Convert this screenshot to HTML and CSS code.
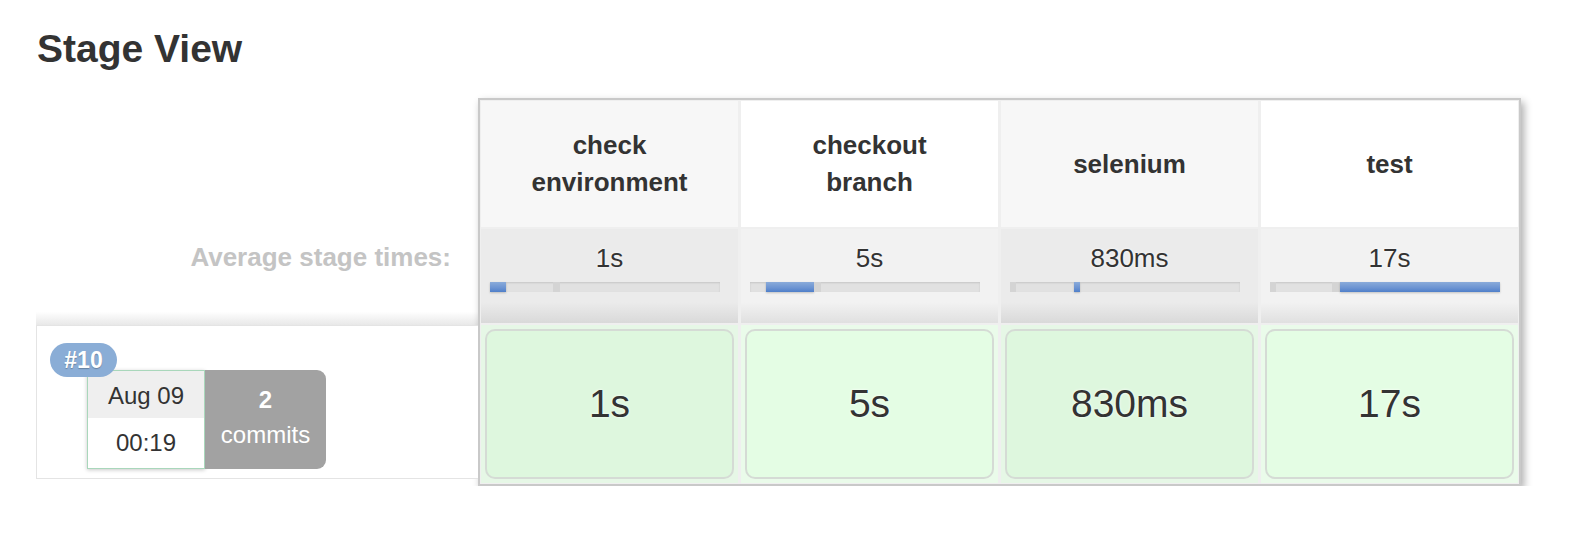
FILE: index.html
```html
<!DOCTYPE html>
<html>
<head>
<meta charset="utf-8">
<title>Stage View</title>
<link rel="stylesheet" href="styles.css">
</head>
<body>
<h2 class="title">Stage View</h2>
<div class="stage-view">
  <div class="side">
    <div class="side-head"></div>
    <div class="side-avg">Average stage times:</div>
    <div class="build-row">
      <span class="badge">#10</span>
      <div class="build-date">
        <div class="date">Aug 09</div>
        <div class="time">00:19</div>
      </div>
      <div class="changes"><strong>2</strong><span>commits</span></div>
    </div>
  </div>
  <div class="table">
    <div class="row head-row">
      <div class="head odd">check environment</div>
      <div class="head even">checkout branch</div>
      <div class="head odd">selenium</div>
      <div class="head even">test</div>
    </div>
    <div class="row avg-row">
      <div class="avg odd">
        <div class="avg-time">1s</div>
        <div class="bar"><span class="seg fill" style="width:16px"></span><span class="seg" style="width:47px"></span><span class="seg tick" style="width:7px"></span></div>
      </div>
      <div class="avg even">
        <div class="avg-time">5s</div>
        <div class="bar"><span class="seg" style="width:16px"></span><span class="seg fill" style="width:48px"></span><span class="seg tick" style="width:7px"></span></div>
      </div>
      <div class="avg odd">
        <div class="avg-time">830ms</div>
        <div class="bar"><span class="seg tick" style="width:6px"></span><span class="seg" style="width:58px"></span><span class="seg fill" style="width:6px"></span></div>
      </div>
      <div class="avg even">
        <div class="avg-time">17s</div>
        <div class="bar"><span class="seg tick" style="width:6px"></span><span class="seg" style="width:56px"></span><span class="seg tick" style="width:8px"></span><span class="seg fill" style="width:160px"></span></div>
      </div>
    </div>
    <div class="row body-row">
      <div class="col odd"><div class="cell">1s</div></div>
      <div class="col even"><div class="cell">5s</div></div>
      <div class="col odd"><div class="cell">830ms</div></div>
      <div class="col even"><div class="cell">17s</div></div>
    </div>
  </div>
</div>
</body>
</html>
```

FILE: styles.css
```css
body {
  margin: 0;
  padding: 0 36px;
  font-family: "Liberation Sans", Arial, Helvetica, sans-serif;
  color: #333;
  background: #fff;
}

.title {
  margin: 26px 0 0 1px;
  font-size: 39px;
  font-weight: bold;
  line-height: 45px;
  color: #333;
}

.stage-view {
  display: flex;
  align-items: flex-start;
  margin-top: 27px;
}

.side {
  width: 442px;
  flex: none;
}

.side-head {
  height: 131px;
}

.side-avg {
  height: 96px;
  box-sizing: border-box;
  padding: 13px 27px 0 0;
  text-align: right;
  font-size: 26px;
  line-height: 30px;
  font-weight: bold;
  color: #c4c4c4;
  background: linear-gradient(to bottom, #fff 0, #fff 86%, #e8e8e8 100%);
}

.build-row {
  position: relative;
  height: 154px;
  box-sizing: border-box;
  border: 1px solid #e4e4e4;
  border-right: none;
  background: #fff;
  display: flex;
  align-items: flex-start;
  padding: 44px 0 0 50px;
}

.badge {
  position: absolute;
  left: 13px;
  top: 17px;
  z-index: 1;
  width: 67px;
  height: 34px;
  border-radius: 17px;
  background: #8aadd6;
  color: #fff;
  font-size: 23px;
  font-weight: bold;
  line-height: 34px;
  text-align: center;
  text-shadow: 0 1px 1px rgba(0, 0, 0, 0.25);
}

.build-date {
  width: 118px;
  height: 99px;
  box-sizing: border-box;
  border: 1.5px solid #a9d7bb;
  background: #fff;
  box-shadow: 0 1px 4px rgba(0, 0, 0, 0.22);
  display: flex;
  flex-direction: column;
  font-size: 24px;
  color: #333;
}

.date {
  height: 47px;
  background: #efefef;
  display: flex;
  align-items: center;
  justify-content: center;
  padding-top: 2px;
  box-sizing: border-box;
}

.time {
  flex: 1;
  display: flex;
  align-items: center;
  justify-content: center;
}

.changes {
  width: 121px;
  height: 99px;
  box-sizing: border-box;
  background: #a2a2a2;
  border-radius: 0 9px 9px 0;
  color: #fff;
  display: flex;
  flex-direction: column;
  align-items: center;
  justify-content: center;
  padding-bottom: 6px;
  font-size: 24px;
  line-height: 35px;
}

.changes strong {
  font-weight: bold;
}

.table {
  width: 1043px;
  flex: none;
  box-sizing: border-box;
  border: 2px solid #c9c9c9;
  padding: 1px;
  background: #efefef;
  box-shadow: 3px 4px 8px rgba(0, 0, 0, 0.32);
  display: flex;
  flex-direction: column;
  gap: 2px;
}

.row {
  display: grid;
  grid-template-columns: repeat(4, 1fr);
  column-gap: 3px;
}

.head-row {
  height: 126px;
}

.head {
  display: flex;
  align-items: center;
  justify-content: center;
  text-align: center;
  padding: 0 30px;
  font-size: 26px;
  line-height: 37px;
  font-weight: bold;
  color: #333;
  background: #f7f7f7;
}

.head.even {
  background: #fff;
}

.avg-row {
  height: 94px;
}

.avg {
  padding-top: 14px;
  background: linear-gradient(to bottom, #ebebeb 0, #ebebeb 78%, #d9d9d9 100%);
}

.avg.even {
  background: linear-gradient(to bottom, #f2f2f2 0, #f2f2f2 78%, #e0e0e0 100%);
}

.avg-time {
  text-align: center;
  font-size: 26px;
  line-height: 30px;
  color: #333;
  text-shadow: 0 0 3px #fff;
}

.bar {
  margin: 9px 0 0 9px;
  width: 230px;
  height: 10px;
  display: flex;
  background: #e1e1e1;
  box-shadow: inset 0 1px 2px rgba(0, 0, 0, 0.12);
}

.seg {
  height: 100%;
  flex: none;
}

.seg.tick {
  background: #d4d4d4;
}

.seg.fill {
  background: linear-gradient(to bottom, #8aabda 0, #6b93d2 60%, #4f7fc9 100%);
  box-shadow: 0 1px 2px rgba(0, 0, 0, 0.2);
}

.body-row {
  height: 158px;
}

.col {
  padding: 4px;
  background: #e6f7e6;
}

.col.even {
  background: #eafbea;
}

.cell {
  height: 100%;
  box-sizing: border-box;
  border: 2px solid #d5dbd5;
  border-radius: 10px;
  background: #def7de;
  display: flex;
  align-items: center;
  justify-content: center;
  font-size: 39px;
  color: #333;
  text-shadow: 0 0 3px #fff;
}

.col.even .cell {
  background: #e4fde4;
}
```
